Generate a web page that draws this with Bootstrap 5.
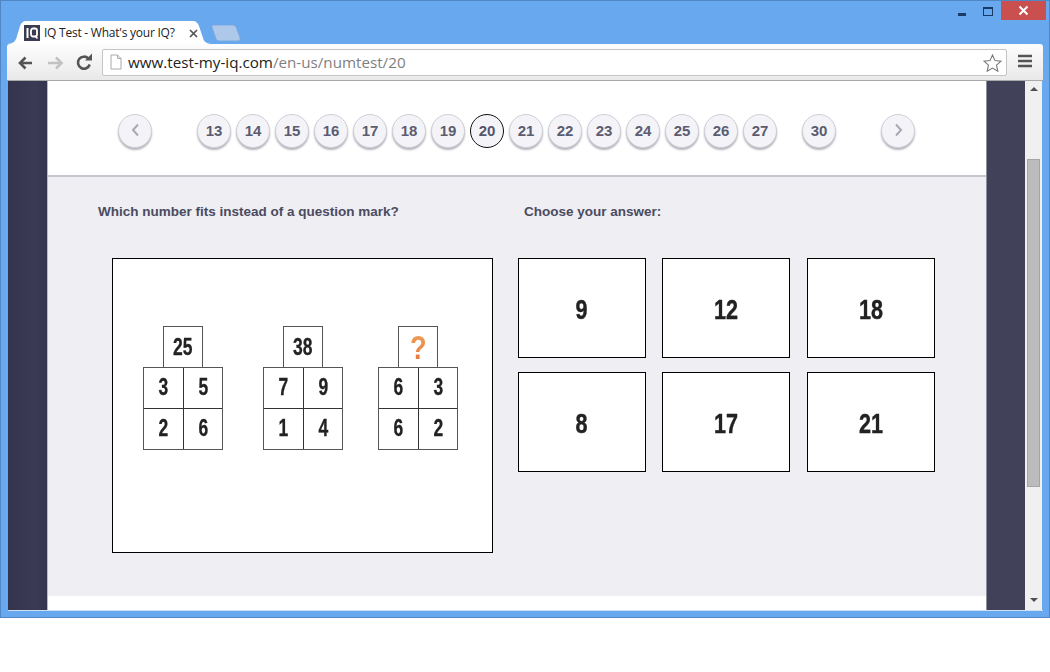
<!DOCTYPE html>
<html lang="en">
<head>
<meta charset="utf-8">
<title>IQ Test - What's your IQ?</title>
<link href="https://cdn.jsdelivr.net/npm/bootstrap@5.3.0/dist/css/bootstrap.min.css" rel="stylesheet">
<style>
html,body{height:672px;overflow:hidden;background:#fff;margin:0}
body{font-family:"Liberation Sans",Arial,sans-serif}
.win{height:618px;background:#67a8ef;border:1px solid #4f86c6;padding:0 6px 7px 7px}
.strip{height:43px}
.tabx{margin-left:-1px;margin-top:20px;width:207px;height:23px;position:relative;padding-left:17px;font:12px/24px "Open Sans",sans-serif;color:#222}
.tabbg{position:absolute;left:0;top:0;z-index:0}
.tabx>span,.tabx>svg.ic{position:relative;z-index:1}
.tabname{width:145px;white-space:nowrap;letter-spacing:-.24px}
.newtab{margin-top:24px;margin-left:-3px}
.ctrls{margin-left:auto;margin-right:-3px}
.ctrlmin{width:8px;height:3px;background:#1b3a63;margin-top:12px;margin-right:17px}
.ctrlmax{width:10px;height:9px;border:1px solid #1b3a63;border-top-width:2px;margin-top:6px;margin-right:8px}
.ctrlx{width:45px;height:19px;background:#c9504f;color:#fff}
.toolb{height:37px;margin-left:-1px;background:linear-gradient(#fdfdfd,#e9e9e9);border-bottom:1px solid #a9a9a9;border-radius:3px 3px 0 0;padding:5px 7px 0 8px}
.navic{width:28px;height:28px}
.omni{width:905px;height:27px;margin-left:3px;background:#fff;border:1px solid #c4c4c4;border-radius:2px;font:15.2px/25px "Open Sans",sans-serif;color:#222;padding-left:7px}
.omni .rest{color:#7f7f7f}
.urlt{margin-left:6px;white-space:nowrap}
.menuic{margin-left:11px;margin-top:5px}
.view{height:529px;box-shadow:0 1px 0 #cfe0f5}
.sideL{width:39px;background:linear-gradient(90deg,#34344e,#3a3a54 70%,#35354f)}
.pagecol{width:940px;background:#fff;border-left:1px solid #b9b9c8;border-right:1px solid #8f8f9c}
.sideR{width:38px;background:#41415a}
.sbar{width:17px;background:#f0f0f0}
.sthumb{width:13px;height:328px;margin:68px auto 0;background:#bcbcbc;border:1px solid #a5a5a5}
.arrow-up,.arrow-dn{width:0;height:0;border-left:4px solid transparent;border-right:4px solid transparent;margin-left:auto;margin-right:auto}
.arrow-up{border-bottom:4px solid #505050;margin-top:6px}
.arrow-dn{border-top:4px solid #505050;margin-top:111px}
.phead{height:96px;border-bottom:2px solid #c6c6ce;padding-left:70px;padding-top:33px}
.bub{flex:none;width:34px;height:34px;border-radius:50%;background:#f4f4f8;border:1px solid #cfcfd8;box-shadow:0 2px 2px #b5b5bd;color:#5c5c70;font-weight:700;font-size:15px;line-height:32px;text-align:center;margin-right:5px}
.bub.cur{border-color:#111;box-shadow:none;color:#55556a}
.bub.gl{margin-right:45px}
.bub.g2{margin-right:25px}
.bub.g3{margin-right:45px}
.bub svg{vertical-align:-1px}
.pbody{height:419px;background:#eeeef3;padding:27px 0 0 49px}
.qrow{padding-left:1px}
.qt{font-size:13.5px;font-weight:700;color:#4b4b5f;line-height:16px;height:54px}
.q1{width:426px}
.puz{width:381px;height:295px;background:#fff;border:1px solid #000;margin-left:15px;padding-top:67px;padding-left:30px}
.ans{margin-left:25px;column-gap:16.4px;row-gap:14px;width:418px}
.ansb{width:128px;height:100px;background:#fff;border:1px solid #000;font-weight:700;font-size:27px;color:#222;line-height:100px;text-align:center;padding-top:1px}
.nar{display:inline-block;transform:scaleX(.8);-webkit-text-stroke:.4px #222}
.nar2{display:inline-block;transform:scaleX(.76);-webkit-text-stroke:.3px #222}
.dia{width:80px;margin-right:40px;flex:none}
.dia.d2{margin-right:35px}
.topc{width:40px;height:41px;border:1px solid #555;border-bottom:0;margin-left:20px;font-weight:700;font-size:23px;line-height:40px;text-align:center;color:#222;background:#fff}
.qmk{display:inline-block;transform:scaleX(.8);font-size:34px;line-height:40px;background:linear-gradient(#f2a65a,#e8713a);-webkit-background-clip:text;background-clip:text;color:transparent}
.cellg{display:grid;grid-template-columns:40px 38px;grid-template-rows:41px 40px;border:1px solid #555;width:80px}
.cellg div{font-weight:700;font-size:23px;line-height:39px;text-align:center;color:#222}
.cellg div:nth-child(odd){border-right:1px solid #333}
.cellg div:nth-child(-n+2){border-bottom:1px solid #333}
</style>
</head>
<body>
<div class="win">
  <div class="strip d-flex">
    <div class="tabx d-flex align-items-start">
      <svg class="tabbg" width="207" height="23" viewBox="0 0 207 23"><path d="M0 23c6 0 9-3 10-8l3-10c1-3 3-5 6-5h167c3 0 5 2 6 5l4 12c1 4 4 6 11 6z" fill="#fff"/></svg>
      <svg class="ic me-1 mt-1" width="16" height="16" viewBox="0 0 16 16"><rect width="16" height="16" fill="#3c3c50"/><rect x="2.500" y="3" width="2" height="10" fill="#fff"/><rect x="7" y="3.500" width="6" height="8" rx="2" fill="none" stroke="#fff" stroke-width="1.800"/><path d="M11 11l2.500 2.500" stroke="#fff" stroke-width="1.600"/></svg>
      <span class="tabname">IQ Test - What's your IQ?</span>
      <svg class="ic mt-2" width="9" height="9" viewBox="0 0 9 9"><path d="M1 1l7 7M8 1l-7 7" stroke="#555" stroke-width="1.700"/></svg>
    </div>
    <svg class="newtab" width="31" height="16" viewBox="0 0 34 16" preserveAspectRatio="none"><path d="M2 0h22c2 0 3 1 4 3l4 10c.5 2-1 3-3 3H9c-2 0-3-1-4-3L1 2c-.4-1 0-2 1-2z" fill="#aec8ea" stroke="#7fa6d6"/></svg>
    <div class="ctrls d-flex align-items-start">
      <div class="ctrlmin"></div>
      <div class="ctrlmax"></div>
      <div class="ctrlx d-flex align-items-center justify-content-center"><svg width="11" height="11" viewBox="0 0 11 11"><path d="M1.500 1.500l8 8M9.500 1.500l-8 8" stroke="#fff" stroke-width="2"/></svg></div>
    </div>
  </div>
  <div class="toolb d-flex align-items-start">
    <svg class="navic" viewBox="0 0 28 28"><path d="M16 14H4M9.500 8.500L4 14l5.500 5.500" transform="translate(1,0)" fill="none" stroke="#555" stroke-width="2.600"/></svg>
    <svg class="navic" viewBox="0 0 28 28"><path d="M6 14h13M14 8.500l5.500 5.500-5.500 5.500" transform="translate(-1,0)" fill="none" stroke="#c2c2c2" stroke-width="2.600"/></svg>
    <svg class="navic" viewBox="0 0 28 28"><path d="M18.700 15.500a6 6 0 1 1-1.400-6" fill="none" stroke="#555" stroke-width="2.600"/><path d="M14 11.500h7v-7z" fill="#555"/></svg>
    <div class="omni d-flex align-items-start">
      <svg class="mt-1" width="12" height="16" viewBox="0 0 12 16"><path d="M1 1h6.500L11 4.500V15H1z M7.500 1v3.500H11" fill="#fff" stroke="#aaa"/></svg>
      <span class="urlt">www.test-my-iq.com<span class="rest">/en-us/numtest/20</span></span>
      <svg class="ms-auto me-1 mt-1" width="19" height="18" viewBox="0 0 19 18"><path d="M9.500 1l2.500 5.600 6 .6-4.500 4 1.300 6-5.300-3.100-5.300 3.100 1.300-6-4.500-4 6-.6z" fill="#fff" stroke="#777" stroke-width="1.100"/></svg>
    </div>
    <svg class="menuic" width="14" height="14" viewBox="0 0 14 14"><path d="M0 2h14M0 7h14M0 12h14" stroke="#555" stroke-width="2.400"/></svg>
  </div>
  <div class="view d-flex">
    <div class="sideL"></div>
    <div class="pagecol">
      <div class="phead d-flex align-items-start">
        <div class="bub gl"><svg width="9" height="14" viewBox="0 0 9 14"><path d="M7 1.500L2 7l5 5.500" fill="none" stroke="#a8a8b4" stroke-width="2"/></svg></div>
        <div class="bub">13</div><div class="bub">14</div><div class="bub">15</div><div class="bub">16</div><div class="bub">17</div><div class="bub">18</div><div class="bub">19</div><div class="bub cur">20</div><div class="bub">21</div><div class="bub">22</div><div class="bub">23</div><div class="bub">24</div><div class="bub">25</div><div class="bub">26</div><div class="bub g2">27</div>
        <div class="bub g3">30</div>
        <div class="bub"><svg width="9" height="14" viewBox="0 0 9 14"><path d="M2 1.500L7 7l-5 5.500" fill="none" stroke="#a8a8b4" stroke-width="2"/></svg></div>
      </div>
      <div class="pbody">
        <div class="d-flex qrow">
          <div class="qt q1">Which number fits instead of a question mark?</div>
          <div class="qt">Choose your answer:</div>
        </div>
        <div class="d-flex align-items-start">
          <div class="puz d-flex align-items-start">
            <div class="dia"><div class="topc"><span class="nar2">25</span></div><div class="cellg"><div><span class="nar2">3</span></div><div><span class="nar2">5</span></div><div><span class="nar2">2</span></div><div><span class="nar2">6</span></div></div></div>
            <div class="dia d2"><div class="topc"><span class="nar2">38</span></div><div class="cellg"><div><span class="nar2">7</span></div><div><span class="nar2">9</span></div><div><span class="nar2">1</span></div><div><span class="nar2">4</span></div></div></div>
            <div class="dia"><div class="topc"><span class="qmk">?</span></div><div class="cellg"><div><span class="nar2">6</span></div><div><span class="nar2">3</span></div><div><span class="nar2">6</span></div><div><span class="nar2">2</span></div></div></div>
          </div>
          <div class="ans d-flex flex-wrap">
            <div class="ansb"><span class="nar">9</span></div><div class="ansb"><span class="nar">12</span></div><div class="ansb"><span class="nar">18</span></div>
            <div class="ansb"><span class="nar">8</span></div><div class="ansb"><span class="nar">17</span></div><div class="ansb"><span class="nar">21</span></div>
          </div>
        </div>
      </div>
    </div>
    <div class="sideR"></div>
    <div class="sbar">
      <div class="arrow-up"></div>
      <div class="sthumb"></div>
      <div class="arrow-dn"></div>
    </div>
  </div>
</div>
</body>
</html>
